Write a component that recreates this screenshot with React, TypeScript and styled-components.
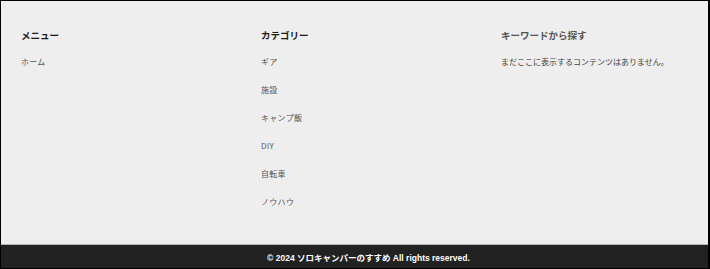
import styled, { createGlobalStyle } from 'styled-components';

const GlobalStyle = createGlobalStyle`
	html, body {
		margin: 0;
		padding: 0;
		background: #ffffff;
	}
	body {
		font-family: 'Noto Sans CJK JP', 'Liberation Sans', sans-serif;
	}
`;

const Page = styled.div`
	box-sizing: border-box;
	width: 710px;
	height: 269px;
	border: 1px solid #000;
	border-right-width: 2px;
	display: flex;
	flex-direction: column;
	background: #eeeeee;
`;

const Columns = styled.div`
	flex: 1;
	display: grid;
	grid-template-columns: 240px 240px 1fr;
	padding: 27px 20px 0 20px;
`;

const Column = styled.section`
	display: flex;
	flex-direction: column;
`;

const Heading = styled.h3<{ $muted?: boolean }>`
	margin: 0 0 14px;
	font-size: 9.5px;
	line-height: 14px;
	font-weight: bold;
	color: ${(p) => (p.$muted ? '#555' : '#1a1a1a')};
`;

const LinkList = styled.ul`
	list-style: none;
	margin: 0;
	padding: 0;
	display: flex;
	flex-direction: column;
	gap: 16px;
`;

const LinkItem = styled.li`
	font-size: 8px;
	line-height: 12px;
	color: #555;
	letter-spacing: 0.3px;
`;

const Note = styled.p`
	margin: 0;
	font-size: 8px;
	line-height: 12px;
	color: #444;
`;

const Footer = styled.footer`
	height: 23px;
	border-top: 1px solid #b5b5b5;
	background: #222;
	display: flex;
	align-items: center;
	justify-content: center;
	padding-left: 28px;
	color: #fff;
	font-family: 'Liberation Sans', 'Noto Sans CJK JP', sans-serif;
	font-size: 8.5px;
	font-weight: bold;
`;

const categories = ['ギア', '施設', 'キャンプ飯', 'DIY', '自転車', 'ノウハウ'];

function App(): JSX.Element {
	return (
		<>
			<GlobalStyle />
			<Page>
				<Columns>
					<Column>
						<Heading>メニュー</Heading>
						<LinkList>
							<LinkItem>ホーム</LinkItem>
						</LinkList>
					</Column>
					<Column>
						<Heading>カテゴリー</Heading>
						<LinkList>
							{categories.map((c) => (
								<LinkItem key={c}>{c}</LinkItem>
							))}
						</LinkList>
					</Column>
					<Column>
						<Heading $muted>キーワードから探す</Heading>
						<Note>まだここに表示するコンテンツはありません。</Note>
					</Column>
				</Columns>
				<Footer>© 2024 ソロキャンパーのすすめ All rights reserved.</Footer>
			</Page>
		</>
	);
}

export default App;
